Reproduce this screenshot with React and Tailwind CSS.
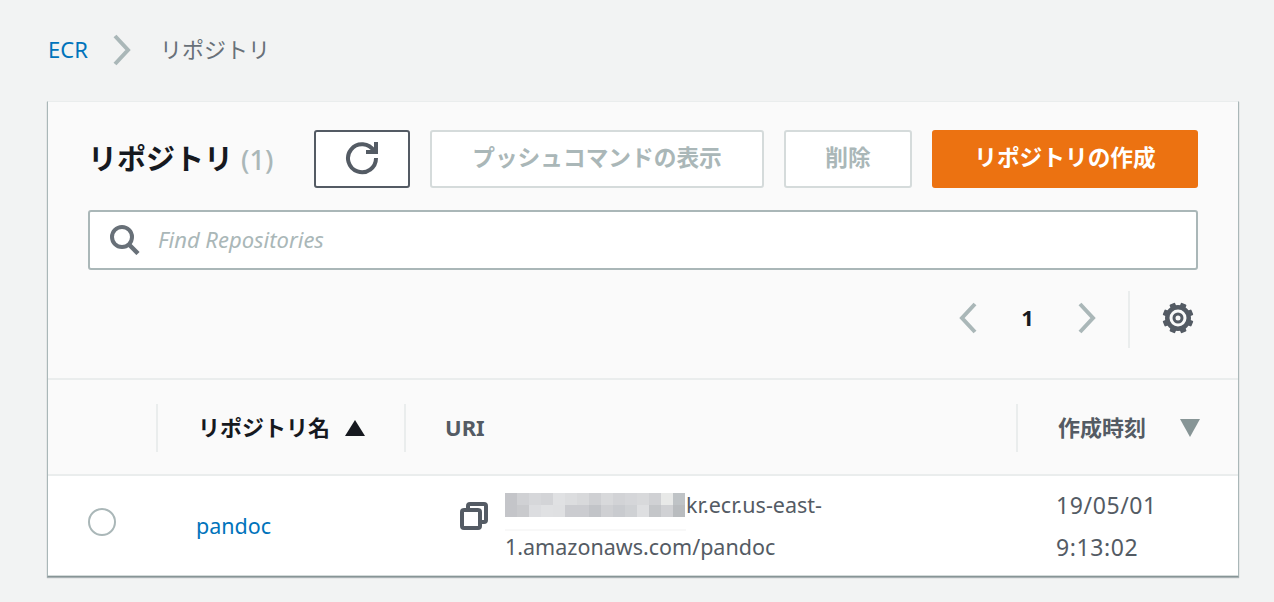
const FONT = "font-['Noto_Sans','Noto_Sans_CJK_JP',sans-serif]";

const blur1 = ['#c4c5c9','#d0d1d4','#d6d7da','#d3d4d7','#e0e1e3','#dcdddf','#d8d9db','#cfd0d3','#d8d9db','#d2d3d6','#d5d6d9','#d8d9db','#d0d1d4','#e8e9e8','#bfc3c6'];
const blur2 = ['#c4c5c9','#c9cacd','#dcdde0','#e0e1e3','#dfe0e2','#cbccd0','#cbccd0','#c2c4c8','#cfd0d3','#c9cbcf','#cfd1d4','#dedfe1','#c4c6c9','#d0d1d4','#b9bcbf'];

function Chevron({ left, color = '#aab7b8', className }) {
  return (
    <svg width="20" height="32" viewBox="0 0 20 32" fill="none" className={className}>
      <path d={left ? 'M17 2 L4 16 L17 30' : 'M3 2 L16 16 L3 30'} stroke={color} strokeWidth="4" />
    </svg>
  );
}

function Gear() {
  const teeth = Array.from({ length: 8 }, (_, i) => i * 45 + 22.5);
  return (
    <svg width="32" height="32" viewBox="0 0 32 32" fill="none">
      <circle cx="16" cy="16" r="10.75" stroke="#545b64" strokeWidth="4.5" />
      {teeth.map((a) => (
        <rect key={a} x="13" y="0.5" width="6" height="5" rx="1" fill="#545b64" transform={`rotate(${a} 16 16)`} />
      ))}
      <circle cx="16" cy="16" r="4" stroke="#545b64" strokeWidth="3" />
    </svg>
  );
}

function Btn({ children, className }) {
  return (
    <div className={`h-[58px] pb-[2px] flex items-center justify-center rounded-[3px] bg-white border-2 border-[#d5dbdb] text-[#aab7b8] font-bold text-[22.7px] ${className}`}>
      {children}
    </div>
  );
}

export default function App() {
  return (
    <div className={`${FONT} w-[1274px] h-[602px] overflow-hidden bg-[#f2f3f3] flex flex-col pl-[47px] pr-[35px]`}>
      <div className="h-[101px] flex items-center pb-[2px] text-[22px]">
        <span className="text-[#0073bb] w-[65px] pl-px">ECR</span>
        <Chevron />
        <span className="text-[#687078] ml-[28px]">リポジトリ</span>
      </div>

      <div className="h-[476px] flex flex-col bg-[#fafafa] border-l border-r border-[#aab7b8] border-t border-t-[#eaeded] border-b border-b-[#879596] shadow-[0_1px_1px_rgba(0,28,36,0.3)]">
        <div className="h-[278px] px-[40px] pt-[28px] border-b-2 border-[#eaeded] flex flex-col">
          <div className="flex items-center h-[58px]">
            <div className="w-[226px] pb-[2px] flex items-baseline text-[29px] leading-none font-bold text-[#16191f]">
              <span>リポジトリ</span>
              <span className="font-medium text-[#aab7b8] ml-[8px] text-[27px]">(1)</span>
            </div>
            <div className="w-[96px] h-[58px] flex items-center justify-center rounded-[3px] border-2 border-[#545b64] bg-white">
              <svg width="36" height="34" viewBox="0 0 36 34" fill="none">
                <path d="M32 16 A14 14 0 1 1 30 9" stroke="#545b64" strokeWidth="4" />
                <path d="M32 0 V10 H22" stroke="#545b64" strokeWidth="4" />
              </svg>
            </div>
            <Btn className="w-[334px] ml-[20px]">プッシュコマンドの表示</Btn>
            <Btn className="w-[128px] ml-[20px]">削除</Btn>
            <div className="w-[266px] h-[58px] pb-[2px] ml-[20px] flex items-center justify-center rounded-[3px] bg-[#ec7211] text-white font-bold text-[22.7px]">
              リポジトリの作成
            </div>
          </div>

          <div className="mt-[22px] h-[60px] flex items-center rounded-[3px] border-2 border-[#aab7b8] bg-white pl-[20px]">
            <svg width="30" height="30" viewBox="0 0 30 30" fill="none">
              <circle cx="12" cy="12" r="10" stroke="#687078" strokeWidth="4" />
              <path d="M18.5 19 L28 28.5" stroke="#687078" strokeWidth="4.5" />
            </svg>
            <span className="ml-[18px] -mt-[2px] italic text-[#aab7b8] text-[22px]">Find Repositories</span>
          </div>

          <div className="mt-[21px] h-[57px] flex items-center justify-end">
            <div className="flex items-center -mt-[4px]">
              <Chevron left />
              <span className="w-[99px] text-center text-[22px] font-bold text-[#16191f]">1</span>
              <Chevron />
            </div>
            <div className="ml-[31px] w-[2px] h-[57px] bg-[#eaeded]" />
            <div className="ml-[32px] mr-[4px] -mt-[4px]"><Gear /></div>
          </div>
        </div>

        <div className="h-[96px] pt-[2px] border-b-2 border-[#eaeded] grid grid-cols-[108px_248px_612px_1fr] items-center text-[22px] font-bold">
          <div />
          <div className="h-[48px] border-l-2 border-[#eaeded] flex items-center pl-[40px] text-[#16191f]">
            <span className="-mt-[2px]">リポジトリ名</span>
            <svg width="20" height="16" viewBox="0 0 20 16" className="ml-[15px]"><path d="M10 0 L20 16 H0 Z" fill="#16191f" /></svg>
          </div>
          <div className="h-[48px] border-l-2 border-[#eaeded] flex items-center pl-[39px] text-[#545b64]">
            <span className="-mt-[2px]">URI</span>
          </div>
          <div className="h-[48px] border-l-2 border-[#eaeded] flex items-center pl-[40px] text-[#545b64]">
            <span className="-mt-[2px]">作成時刻</span>
            <svg width="20" height="18" viewBox="0 0 20 18" className="ml-[34px]"><path d="M0 0 H20 L10 18 Z" fill="#879596" /></svg>
          </div>
        </div>

        <div className="flex-1 bg-white border-b border-[#d5dbdb] grid grid-cols-[109px_248px_612px_1fr] items-center text-[21.5px] text-[#545b64]">
          <div className="pl-[40px]">
            <div className="w-[28px] h-[28px] rounded-full border-2 border-[#aab7b8] bg-white -mt-[8px]" />
          </div>
          <div className="pl-[39px] pt-[2px] text-[#0073bb]">pandoc</div>
          <div className="flex pl-[55px]">
            <svg width="28" height="28" viewBox="0 0 28 28" fill="none" className="mt-[18px] shrink-0">
              <rect x="2" y="8" width="18" height="18" rx="2" stroke="#545b64" strokeWidth="4" />
              <path d="M8 6 V4 Q8 2 10 2 H24 Q26 2 26 4 V18 Q26 20 24 20 H22" stroke="#545b64" strokeWidth="4" />
            </svg>
            <div className="relative ml-[17px] w-[340px] leading-[42px]">
              <span className="inline-grid grid-cols-[repeat(15,12px)] grid-rows-[12px_12px] w-[181px] align-top mt-[9px]">
                {[...blur1, ...blur2].map((c, i) => (
                  <span key={i} style={{ background: c }} />
                ))}
              </span>
              kr.ecr.us-east-
              <br />
              1.amazonaws.com/pandoc
              <span className="absolute left-0 top-[45px] w-[181px] h-[2px] bg-[#f8f8f8]" />
            </div>
          </div>
          <div className="pl-[39px] leading-[42px] text-[23px] tracking-[0.6px]">
            19/05/01
            <br />
            9:13:02
          </div>
        </div>
      </div>
    </div>
  );
}
